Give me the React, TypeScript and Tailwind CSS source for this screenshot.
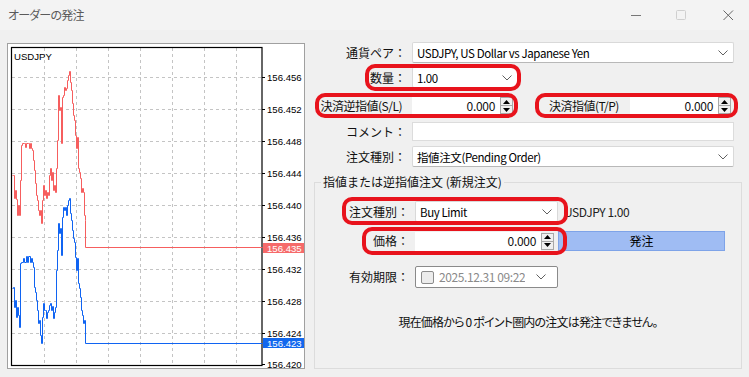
import type { ReactNode } from "react";

const askPts: [number, number][] = [
  [12, 175], [13, 175], [14, 198], [15, 190], [16, 199], [17, 215], [18, 205], [19, 215], [20, 180],
  [21, 145], [22, 143], [24, 143], [25, 147], [26, 143], [28, 143], [29, 148], [30, 143], [31, 148],
  [32, 150], [33, 160], [34, 170], [35, 183], [36, 195], [37, 200], [38, 210], [39, 215], [40, 210],
  [41, 223], [42, 200], [43, 185], [44, 195], [45, 190], [46, 198], [47, 192], [48, 195], [49, 175],
  [50, 168], [51, 180], [52, 172], [53, 190], [54, 185], [55, 192], [56, 168], [57, 140], [58, 95],
  [59, 110], [60, 107], [61, 143], [62, 97], [63, 95], [64, 87], [65, 90], [66, 88], [67, 80],
  [68, 75], [69, 71], [70, 82], [71, 90], [72, 103], [73, 115], [74, 120], [75, 135], [76, 148],
  [77, 137], [78, 168], [79, 172], [80, 178], [81, 192], [82, 188], [83, 192], [84, 215], [85, 220],
  [85, 247], [262, 247],
];

const bidPts: [number, number][] = [
  [12, 288], [13, 287], [14, 307], [15, 300], [16, 317], [17, 307], [18, 315], [19, 327], [20, 263],
  [21, 262], [23, 258], [24, 262], [26, 256], [27, 262], [28, 256], [30, 262], [31, 258], [32, 262],
  [33, 267], [34, 287], [35, 292], [36, 300], [37, 310], [38, 323], [39, 320], [40, 335], [41, 343],
  [42, 317], [43, 303], [44, 310], [45, 310], [46, 318], [47, 312], [48, 310], [49, 305], [50, 303],
  [51, 310], [52, 306], [53, 318], [54, 312], [55, 307], [56, 270], [57, 250], [58, 223], [59, 233],
  [60, 228], [61, 255], [62, 217], [63, 207], [64, 210], [65, 207], [66, 215], [67, 205], [68, 200],
  [69, 198], [70, 213], [71, 220], [72, 230], [73, 238], [74, 242], [75, 257], [76, 270], [77, 258],
  [78, 283], [79, 288], [80, 297], [81, 310], [82, 315], [83, 323], [84, 320], [85, 343], [262, 343],
];

function stepPath(pts: [number, number][]) {
  let d = `M${pts[0][0] + 0.5} ${pts[0][1] + 0.5}`;
  for (let i = 1; i < pts.length; i++) {
    d += ` H${pts[i][0] + 0.5} V${pts[i][1] + 0.5}`;
  }
  return d;
}

const gridX = [44, 76, 108, 140, 172, 204, 236];
const gridY = [77, 109, 141, 173, 205, 237, 269, 301, 333];
const axisLabels = [
  ["156.456", 77], ["156.452", 109], ["156.448", 141], ["156.444", 173], ["156.440", 205],
  ["156.436", 237], ["156.432", 269], ["156.428", 301], ["156.424", 333], ["156.420", 364],
] as const;

function Chart() {
  return (
    <svg width="296" height="324" viewBox="8 44 296 324" className="block">
      <rect x="8" y="44" width="296" height="324" fill="#fff" />
      {gridX.map((x) => (
        <line key={x} x1={x + 0.5} y1="48" x2={x + 0.5} y2="365" stroke="#c4c4c4" strokeDasharray="3 3" />
      ))}
      {gridY.map((y) => (
        <line key={y} x1="12" y1={y + 0.5} x2="262" y2={y + 0.5} stroke="#c4c4c4" strokeDasharray="3 3" />
      ))}
      <rect x="11.5" y="47.5" width="250.5" height="318" fill="none" stroke="#000" strokeWidth="1.2" />
      {axisLabels.map(([t, y]) => (
        <g key={t}>
          <line x1="262" y1={y + 0.5} x2="265" y2={y + 0.5} stroke="#000" />
          <text x="267" y={y + 3.5} fontSize="9.6" fontFamily="'Liberation Sans', sans-serif" fill="#000">
            {t}
          </text>
        </g>
      ))}
      <path d={stepPath(askPts)} fill="none" stroke="#f65e5e" strokeWidth="1" />
      <path d={stepPath(bidPts)} fill="none" stroke="#1064f2" strokeWidth="1" />
      <rect x="263" y="243" width="41" height="10" fill="#f66a6a" />
      <text x="267" y="251.5" fontSize="9.6" fontFamily="'Liberation Sans', sans-serif" fill="#fff">
        156.435
      </text>
      <rect x="263" y="338" width="41" height="10" fill="#1268ee" />
      <text x="267" y="346.5" fontSize="9.6" fontFamily="'Liberation Sans', sans-serif" fill="#fff">
        156.423
      </text>
      <text x="14" y="60" fontSize="9.6" fontFamily="'Liberation Sans', sans-serif" fill="#000">
        USDJPY
      </text>
    </svg>
  );
}

function Chevron() {
  return (
    <svg width="10" height="6" viewBox="0 0 10 6" className="shrink-0">
      <polyline points="0.5,0.5 5,5 9.5,0.5" fill="none" stroke="#606060" strokeWidth="1" />
    </svg>
  );
}

function Spinner() {
  return (
    <div className="w-[13px] h-[17px] flex flex-col border border-[#a8a8a8] bg-[#f0f0f0] shrink-0">
      <div className="flex-1 flex items-center justify-center border-b border-[#a8a8a8]">
        <svg width="7" height="4" viewBox="0 0 7 4">
          <polygon points="3.5,0 7,4 0,4" fill="#000" />
        </svg>
      </div>
      <div className="flex-1 flex items-center justify-center">
        <svg width="7" height="4" viewBox="0 0 7 4">
          <polygon points="0,0 7,0 3.5,4" fill="#000" />
        </svg>
      </div>
    </div>
  );
}

function Select({ value, className }: { value: string; className: string }) {
  return (
    <div
      className={`${className} flex items-center justify-between bg-white border border-[#d9d9d9] border-b-[#b8b8b8] rounded-[2px] pl-[4px] pr-[5px]`}
    >
      <span className="text-black whitespace-nowrap text-[11.5px] tracking-[-0.4px]">{value}</span>
      <Chevron />
    </div>
  );
}

function Highlight({ className }: { className: string }) {
  return <div className={`absolute pointer-events-none border-[4px] border-[#e8131c] rounded-[10px] ${className}`} />;
}

function Label({ children, className = "" }: { children: ReactNode; className?: string }) {
  return <span className={`w-[94px] shrink-0 text-right whitespace-nowrap ${className}`}>{children}</span>;
}

export default function App() {
  return (
    <div className="w-[749px] h-[377px] bg-[#f0f0f0] overflow-hidden flex flex-col font-['Noto_Sans_CJK_JP',sans-serif] text-[12px] leading-[16px] text-[#111]">
      {/* Title bar */}
      <div className="h-[30px] bg-[#f3f3f3] flex items-center shrink-0">
        <span className="ml-[8px] text-[#5a5a5a] [font-feature-settings:'palt'] tracking-[-0.8px]">オーダーの発注</span>
        <div className="ml-auto flex items-center">
          <svg width="11" height="11" viewBox="0 0 11 11" className="mr-[34px]">
            <line x1="0" y1="5.5" x2="10" y2="5.5" stroke="#777" />
          </svg>
          <svg width="11" height="11" viewBox="0 0 11 11" className="mr-[36px]">
            <rect x="0.5" y="0.5" width="9" height="9" fill="none" stroke="#cfcfcf" rx="1" />
          </svg>
          <svg width="11" height="11" viewBox="0 0 11 11" className="mr-[15px]">
            <path d="M0.5 0.5 L10 10 M10 0.5 L0.5 10" stroke="#666" strokeWidth="1" />
          </svg>
        </div>
      </div>

      <div className="flex">
        {/* Chart */}
        <div className="ml-[7px] mt-[13px] w-[298px] h-[326px] border border-[#a0a0a0] bg-white shrink-0">
          <Chart />
        </div>

        {/* Order form */}
        <div className="ml-[7px] w-[430px] flex flex-col">
          <div className="mt-[12px] h-[21px] flex items-center">
            <Label>通貨ペア：</Label>
            <Select value="USDJPY, US Dollar vs Japanese Yen" className="ml-[6px] w-[322px] h-[21px]" />
          </div>

          <div className="relative mt-[4px] h-[21px] flex items-center">
            <Label>数量：</Label>
            <Select value="1.00" className="ml-[6px] w-[106px] h-[21px]" />
            <Highlight className="left-[53px] top-[-3px] w-[156px] h-[27px]" />
          </div>

          <div className="relative mt-[8px] h-[19px] flex items-center">
            <Label className="pr-[4px] tracking-[-0.5px]">決済逆指値(S/L)</Label>
            <div className="ml-[6px] w-[88px] h-[19px] bg-white flex items-center justify-end pr-[5px] tracking-[-0.3px]">0.000</div>
            <Spinner />
            <span className="ml-[36px] w-[81px] whitespace-nowrap tracking-[-0.5px]">決済指値(T/P)</span>
            <div className="w-[88px] h-[19px] bg-white flex items-center justify-end pr-[5px] tracking-[-0.3px]">0.000</div>
            <Spinner />
            <Highlight className="left-[3px] top-[-3px] w-[203px] h-[25px]" />
            <Highlight className="left-[223px] top-[-3px] w-[203px] h-[25px]" />
          </div>

          <div className="mt-[7px] h-[19px] flex items-center">
            <Label>コメント：</Label>
            <div className="ml-[6px] w-[322px] h-[19px] bg-white border border-[#dcdcdc]" />
          </div>

          <div className="mt-[5px] h-[21px] flex items-center">
            <Label>注文種別：</Label>
            <Select value="指値注文(Pending Order)" className="ml-[6px] w-[322px] h-[21px]" />
          </div>

          <fieldset className="mt-[7px] ml-[2px] w-[428px] h-[195px] border border-[#dcdcdc] flex flex-col">
            <legend className="ml-[6px] px-[2px] h-[16px] leading-[16px]">指値または逆指値注文 (新規注文)</legend>

            <div className="relative mt-[11px] h-[21px] flex items-center">
              <Label className="w-[91px]">注文種別：</Label>
              <Select value="Buy Limit" className="ml-[6px] w-[143px] h-[21px]" />
              <span className="ml-[6px] text-[#222] tracking-[-0.4px] whitespace-nowrap">USDJPY 1.00</span>
              <Highlight className="left-[27px] top-[-4px] w-[226px] h-[28px]" />
            </div>

            <div className="relative mt-[9px] h-[20px] flex items-center">
              <Label className="w-[91px]">価格：</Label>
              <div className="ml-[6px] w-[126px] h-[19px] bg-white flex items-center justify-end pr-[5px] tracking-[-0.3px]">0.000</div>
              <Spinner />
              <div className="ml-[4px] w-[167px] h-[20px] bg-[#9fbcf3] border border-[#7ea3e8] flex items-center justify-center text-black">
                発注
              </div>
              <Highlight className="left-[47px] top-[-4px] w-[205px] h-[28px]" />
            </div>

            <div className="mt-[15px] h-[22px] flex items-center">
              <Label className="w-[91px]">有効期限：</Label>
              <div className="ml-[6px] w-[143px] h-[22px] bg-white border border-[#8a8a8a] rounded-[2px] flex items-center pl-[5px] pr-[11px]">
                <div className="w-[13px] h-[13px] border border-[#8c8c8c] bg-[#ececec] rounded-[2px] shrink-0" />
                <span className="ml-[5px] w-[86px] overflow-hidden whitespace-nowrap text-[#8a8a8a] tracking-[-0.4px]">2025.12.31 09:22</span>
                <div className="ml-auto">
                  <Chevron />
                </div>
              </div>
            </div>

            <div className="mt-[26px] text-center [font-feature-settings:'palt'] tracking-[-0.8px]">
              現在価格から 0 ポイント圏内の注文は発注できません。
            </div>
          </fieldset>
        </div>
      </div>
    </div>
  );
}
